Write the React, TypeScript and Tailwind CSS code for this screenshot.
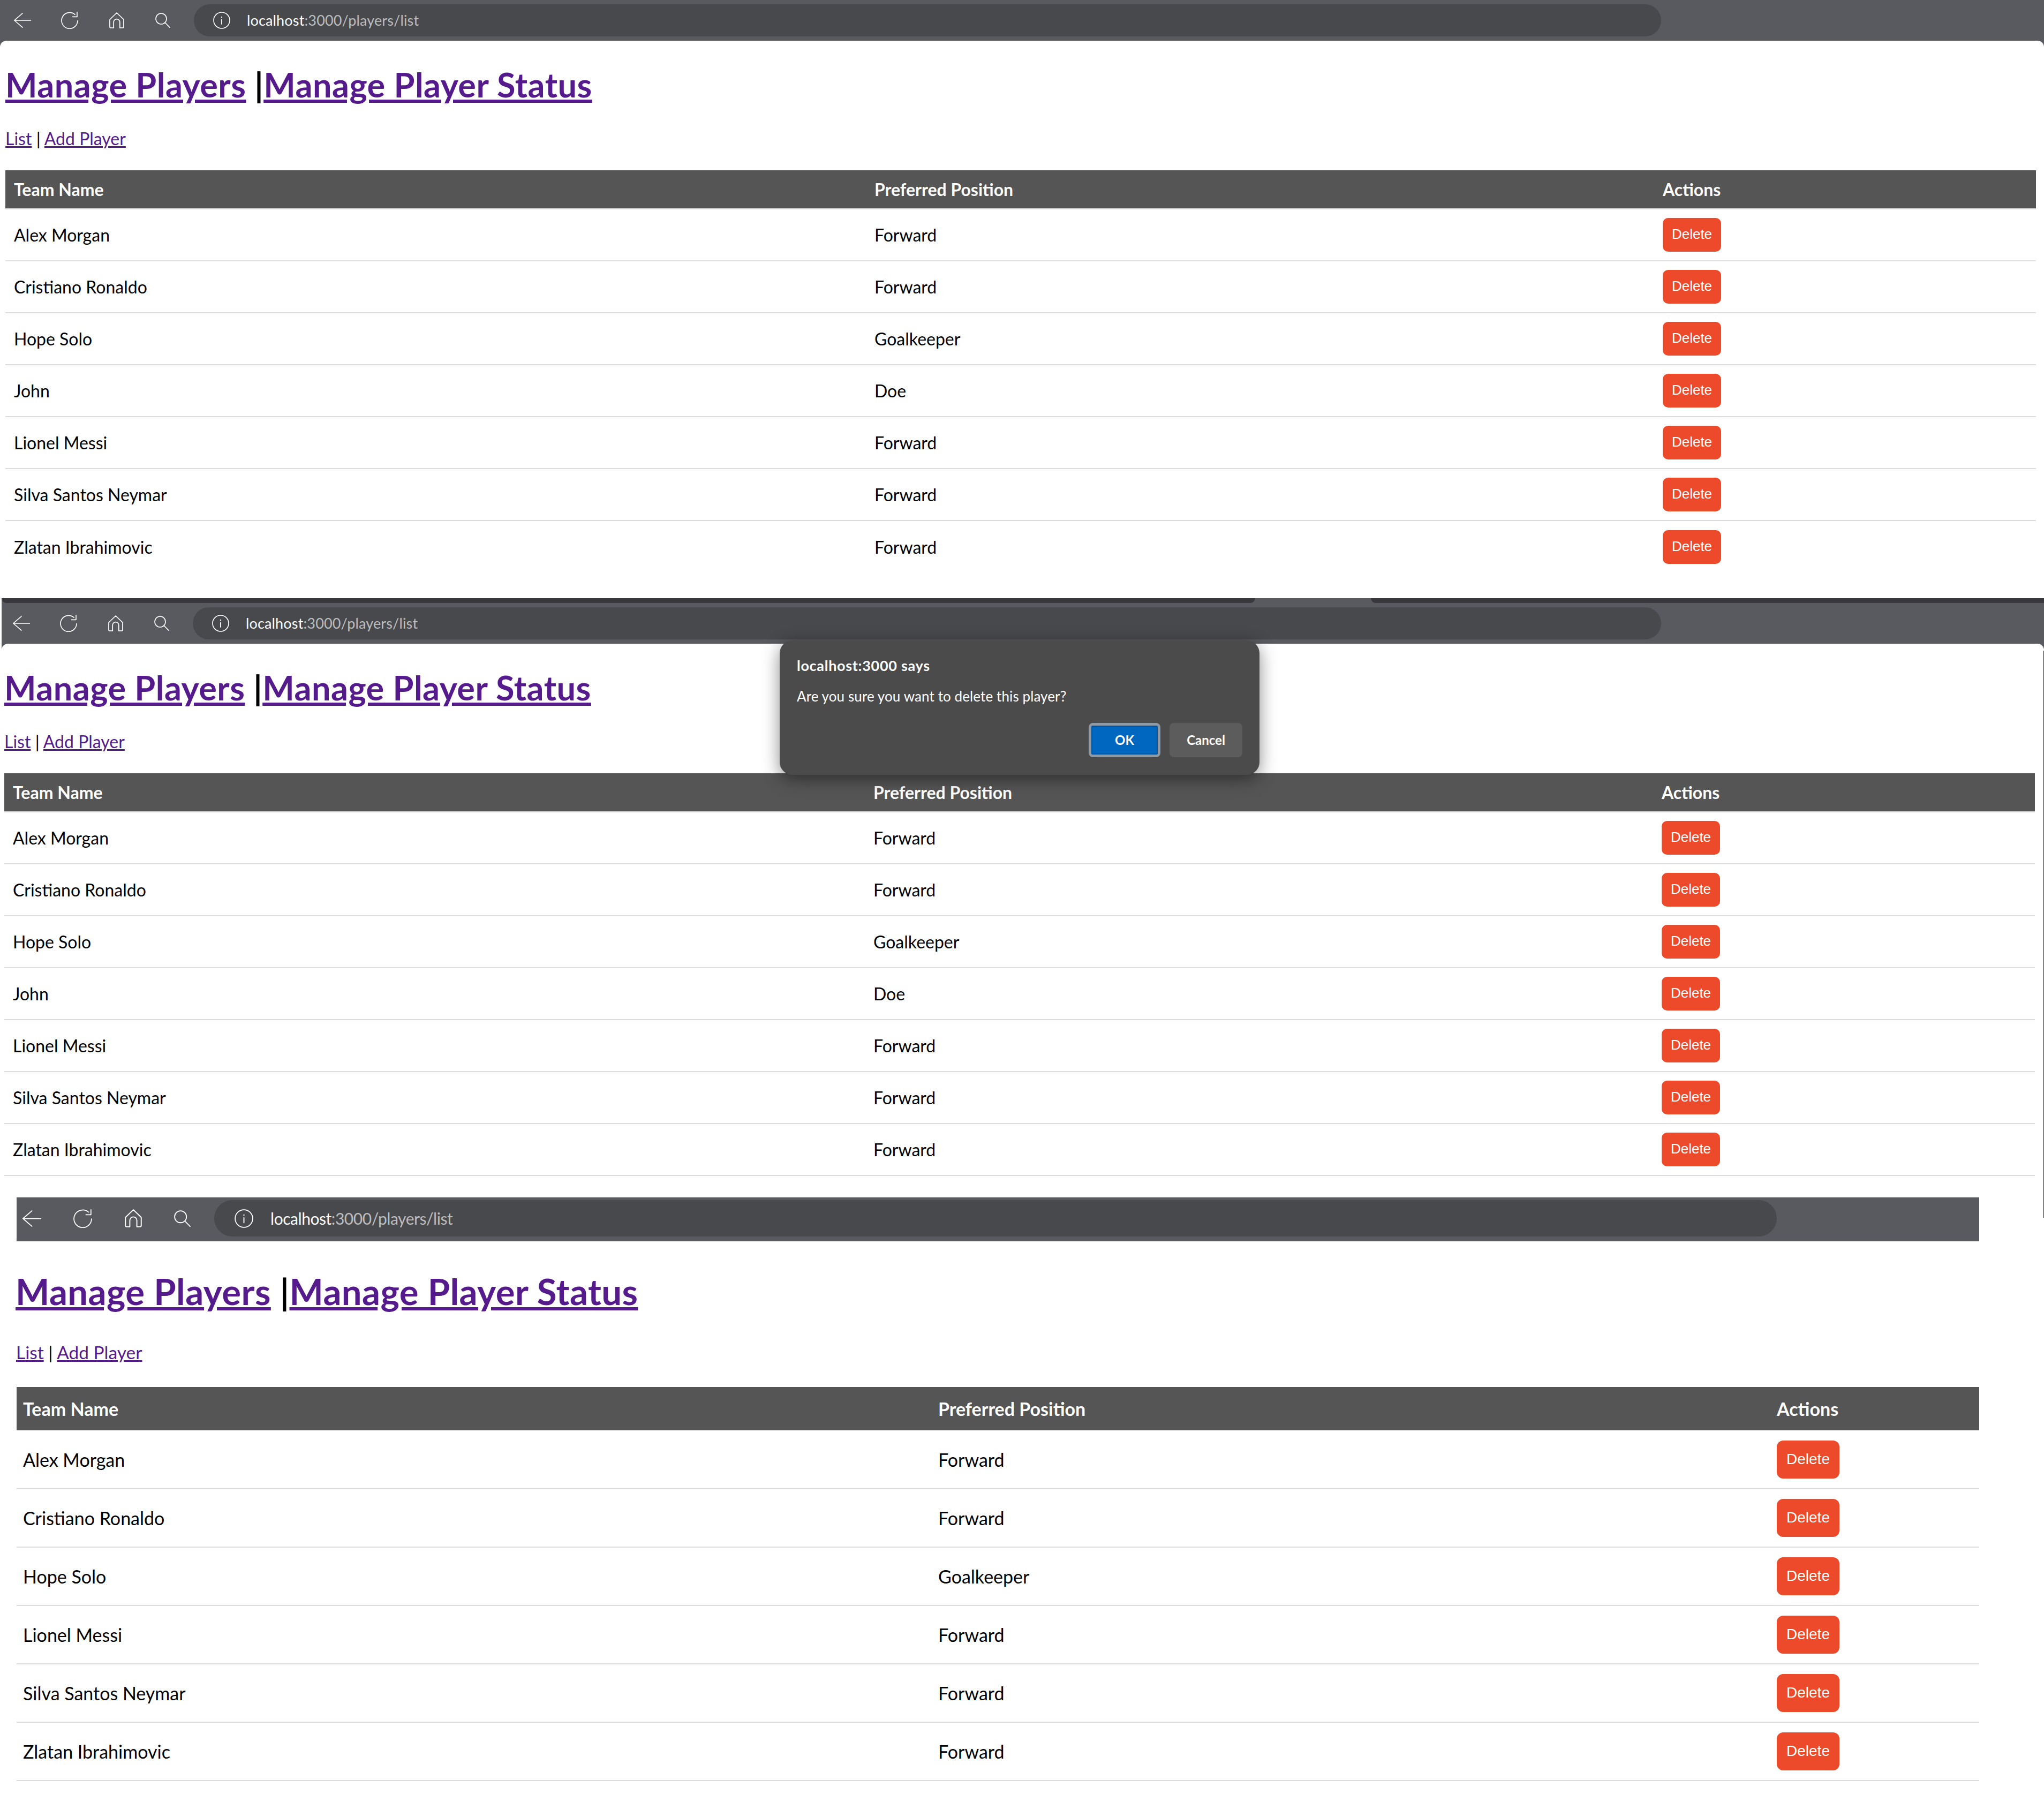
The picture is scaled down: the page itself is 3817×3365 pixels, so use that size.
const players = [
  ["Alex Morgan", "Forward"],
  ["Cristiano Ronaldo", "Forward"],
  ["Hope Solo", "Goalkeeper"],
  ["John", "Doe"],
  ["Lionel Messi", "Forward"],
  ["Silva Santos Neymar", "Forward"],
  ["Zlatan Ibrahimovic", "Forward"],
];

function BackIcon({ className }: { className: string }) {
  return (
    <svg viewBox="0 0 32 28" className={className} fill="none" stroke="white" strokeWidth="1.6" strokeLinecap="round" strokeLinejoin="round">
      <path d="M31.5 14H.8M16 .8.8 14 16 27.2" />
    </svg>
  );
}
function ReloadIcon({ className }: { className: string }) {
  return (
    <svg viewBox="0 0 32 32" className={className} fill="none" stroke="white" strokeWidth="1.6" strokeLinecap="round" strokeLinejoin="round">
      <path d="M26 5.2A15 15 0 1 0 31 16.5M30 .8V9.4H21.4" />
    </svg>
  );
}
function HomeIcon({ className }: { className: string }) {
  return (
    <svg viewBox="0 0 28 30" className={className} fill="none" stroke="white" strokeWidth="1.7" strokeLinecap="round" strokeLinejoin="round">
      <path d="M1 13.5 14 1l13 12.5V27a2 2 0 0 1-2 2h-5.2V18.5a5.8 5.8 0 0 0-11.6 0V29H3a2 2 0 0 1-2-2Z" />
    </svg>
  );
}
function SearchIcon({ className }: { className: string }) {
  return (
    <svg viewBox="0 0 28 28" className={className} fill="none" stroke="white" strokeWidth="1.6" strokeLinecap="round">
      <circle cx="11" cy="11" r="10" />
      <path d="M18.2 18.2 27.4 27.6" />
    </svg>
  );
}
function InfoIcon({ className }: { className: string }) {
  return (
    <svg viewBox="0 0 32 32" className={className} fill="none" stroke="white" strokeWidth="1.6" strokeLinecap="round">
      <circle cx="16" cy="16" r="15" />
      <path d="M16 14.5V23" strokeWidth="1.8" />
      <circle cx="16" cy="10" r="1.2" fill="white" stroke="none" />
    </svg>
  );
}

function Toolbar({ variant }: { variant: "first" | "second" | "third" }) {
  const big = variant === "third";
  return (
    <div
      className={
        big
          ? "flex h-[82px] items-center bg-[#595a5f] pb-[4px] pl-[11px] pr-[378px]"
          : variant === "first"
            ? "flex h-[76px] items-center bg-[#595a5f] pl-[26px] pr-[715px]"
            : "flex h-[76px] items-center bg-[#595a5f] pl-[21px] pr-[715px]"
      }
    >
      <div className={big ? "flex w-[358px] items-center gap-[60px]" : "flex w-[336px] items-center gap-[56px]"}>
        <BackIcon className={big ? "h-[31px] w-[35px] shrink-0" : "h-[28px] w-[32px] shrink-0"} />
        <ReloadIcon className={big ? "h-[35px] w-[35px] shrink-0" : "h-[32px] w-[32px] shrink-0"} />
        <HomeIcon className={big ? "ml-[1px] h-[34px] w-[32px] shrink-0" : "ml-[2px] h-[30px] w-[28px] shrink-0"} />
        <SearchIcon className={big ? "h-[31px] w-[31px] shrink-0" : "ml-[2px] h-[28px] w-[28px] shrink-0"} />
      </div>
      <div
        className={
          big
            ? "flex h-[68px] flex-1 items-center gap-[32px] rounded-full bg-[#48494d] pl-[38px]"
            : "flex h-[60px] flex-1 items-center gap-[31px] rounded-full bg-[#48494d] pl-[36px]"
        }
      >
        <InfoIcon className={big ? "h-[35px] w-[35px] shrink-0" : "h-[32px] w-[32px] shrink-0"} />
        <span className={big ? "text-[30px] tracking-[-0.45px] text-white" : "text-[27px] tracking-[0.15px] text-white"}>
          localhost<span className="text-[#bdbdbd]">:3000/players/list</span>
        </span>
      </div>
    </div>
  );
}

function Heading({ big }: { big: boolean }) {
  return (
    <>
      <h1
        className={
          big
            ? "-ml-[2px] text-[67px] font-bold leading-[79px] tracking-[0.45px] text-black"
            : "text-[63px] font-bold leading-[74px] tracking-[0.5px] text-black"
        }
      >
        <a className="text-[#551a8b] underline">Manage Players</a> |<a className="text-[#551a8b] underline">Manage Player Status</a>
      </h1>
      <p
        className={
          big
            ? "-ml-[1px] mt-[54px] text-[33.5px] leading-[40px] text-black"
            : "mt-[45px] text-[32px] leading-[37px] text-black"
        }
      >
        <a className="text-[#551a8b] underline">List</a> | <a className="text-[#551a8b] underline">Add Player</a>
      </p>
    </>
  );
}

function PlayerTable({ big, rows, lastBorder }: { big: boolean; rows: string[][]; lastBorder: boolean }) {
  const grid = big ? "grid grid-cols-[1709px_1566px_390px]" : "grid grid-cols-[1607px_1472px_713px]";
  const pad = big ? "pl-[12px]" : "pl-[16px]";
  return (
    <div className={big ? "mt-[45px] w-[3665px] text-[34px]" : "mt-[41px] w-[3792px] text-[32px]"}>
      <div
        className={
          grid +
          (big
            ? " h-[82px] items-center border-b-2 border-[#dddddd] bg-[#555555] font-bold text-white"
            : " h-[73px] items-center border-b-2 border-[#dddddd] bg-[#555555] font-bold text-white")
        }
      >
        <div className={pad}>Team Name</div>
        <div className={pad}>Preferred Position</div>
        <div className={pad}>Actions</div>
      </div>
      {rows.map((r, i) => (
        <div
          key={r[0]}
          className={
            grid +
            (big ? " h-[109px]" : " h-[97px]") +
            " items-center text-black" +
            (lastBorder || i < rows.length - 1 ? " border-b-2 border-[#dddddd]" : "")
          }
        >
          <div className={pad}>{r[0]}</div>
          <div className={pad}>{r[1]}</div>
          <div className={pad}>
            <button
              className={
                big
                  ? "h-[71px] w-[117px] rounded-[12px] bg-[#ec4a2b] pb-[2px] font-['Liberation_Sans',sans-serif] text-[28px] text-white"
                  : "h-[63px] w-[109px] rounded-[10px] bg-[#ec4a2b] pb-[2px] font-['Liberation_Sans',sans-serif] text-[26px] text-white"
              }
            >
              Delete
            </button>
          </div>
        </div>
      ))}
    </div>
  );
}

function Dialog() {
  return (
    <div className="absolute left-[1453px] top-[79px] h-[251px] w-[896px] rounded-[24px] bg-[#4b4b4b] px-[32px] pt-[31px] shadow-[0_8px_32px_rgba(0,0,0,0.45)]">
      <div className="text-[27px] font-bold leading-[32px] tracking-[0.7px] text-white">localhost:3000 says</div>
      <div className="mt-[26px] text-[26px] leading-[30px] tracking-[0.1px] text-white">Are you sure you want to delete this player?</div>
      <div className="mt-[35px] flex justify-end gap-[17px]">
        <button className="h-[64px] w-[134px] rounded-[8px] border-[5px] border-[#8f9aa6] bg-[#0067c0] text-[24px] font-bold text-white outline-[2px] -outline-offset-[7px] outline-[#00549c]">
          OK
        </button>
        <button className="h-[64px] w-[136px] rounded-[8px] bg-[#5c5c5c] text-[24px] font-bold text-white">Cancel</button>
      </div>
    </div>
  );
}

export default function App() {
  return (
    <div className="h-[3365px] w-[3817px] overflow-hidden bg-white font-['Lato',sans-serif]">
      <section>
        <Toolbar variant="first" />
        <div className="bg-[#595a5f]">
          <div className="h-[1041px] rounded-t-[12px] bg-white pl-[10px] pt-[45px]">
            <Heading big={false} />
            <PlayerTable big={false} rows={players} lastBorder={false} />
          </div>
        </div>
      </section>

      <section className="relative ml-[3px]">
        <div className="flex h-[9px] bg-[#595a5f]">
          <div className="w-[2341px] rounded-b-[16px] bg-[#38383c]" />
          <div className="ml-[216px] flex-1 rounded-bl-[16px] bg-[#38383c]" />
        </div>
        <Toolbar variant="second" />
        <div className="bg-[#595a5f]">
          <div className="h-[1034px] rounded-t-[12px] bg-white pl-[5px] pt-[45px]">
            <Heading big={false} />
            <PlayerTable big={false} rows={players} lastBorder={true} />
          </div>
        </div>
        <Dialog />
        <div className="absolute right-0 top-[98px] h-[1059px] w-px bg-[#222222]" />
      </section>

      <section className="ml-[31px] w-[3665px]">
        <Toolbar variant="third" />
        <div className="pt-[54px]">
          <Heading big={true} />
          <PlayerTable big={true} rows={players.filter((p) => p[0] !== "John")} lastBorder={true} />
        </div>
      </section>
    </div>
  );
}
